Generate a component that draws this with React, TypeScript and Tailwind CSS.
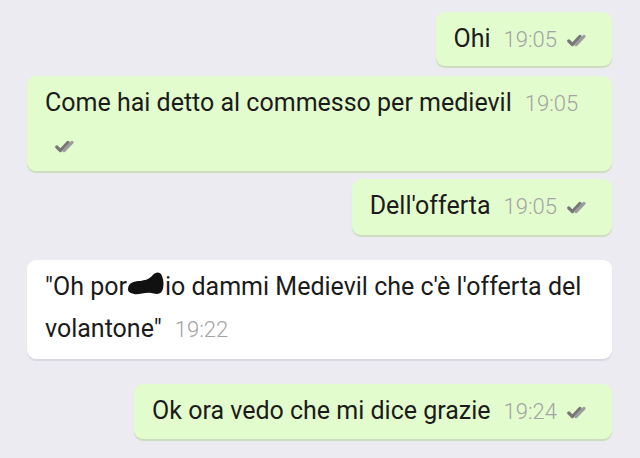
import React from 'react';

type Msg = {
  id: number;
  mine: boolean;
  time: string;
  body: React.ReactNode;
  spacing: string;
};

function Ticks() {
  return (
    <svg width="23" height="13" viewBox="0 0 23 13" className="inline-block align-[0px] ml-[10px]">
      <path d="M1.8 7 L5.4 10.6 L13 2.4" fill="none" stroke="#777" strokeWidth="3.2" strokeLinecap="round" strokeLinejoin="round" />
      <path d="M9 10.6 L17 2.4" fill="none" stroke="#9d9d9d" strokeWidth="3.2" strokeLinecap="round" strokeLinejoin="round" />
    </svg>
  );
}

function Blot() {
  // scribbled-out bit of the quote
  return (
    <svg width="38" height="25" viewBox="0 0 38 25" className="inline-block align-[-1px]">
      <path
        d="M1 18 C1 12 7 10 13 10 C18 9 21 9 25 5 C28 1 33 0 35 5 C37 10 37 16 35 20 C33 24 28 23 24 22 C18 21 12 24 7 23 C3 22 1 21 1 18 Z"
        fill="#111"
      />
    </svg>
  );
}

const messages: Msg[] = [
  { id: 1, mine: true, time: '19:05', body: 'Ohi', spacing: 'mt-[12px] pb-[6px]' },
  { id: 2, mine: true, time: '19:05', body: 'Come hai detto al commesso per medievil', spacing: 'mt-[10px] pb-[5px]' },
  { id: 3, mine: true, time: '19:05', body: "Dell'offerta", spacing: 'mt-[8px] pb-[8px]' },
  {
    id: 4,
    mine: false,
    time: '19:22',
    body: (
      <>
        "Oh por<Blot />io dammi Medievil che c'è l'offerta del volantone"
      </>
    ),
    spacing: 'mt-[25px] pb-[9px]',
  },
  { id: 5, mine: true, time: '19:24', body: 'Ok ora vedo che mi dice grazie', spacing: 'mt-[25px] pb-[7px]' },
];

export default function App() {
  return (
    <div
      className="w-[640px] h-[458px] overflow-hidden bg-[#ecebf1] flex flex-col pl-[27px] pr-[28px]"
      style={{ fontFamily: 'Roboto, "Noto Sans", sans-serif' }}
    >
      {messages.map((m) => (
        <div
          key={m.id}
          className={`${m.spacing} max-w-[585px] rounded-[9px] pl-[18px] pr-[22px] pt-[6px] leading-[42px] text-[25px] text-[#1b1b1b] ${
            m.mine
              ? 'self-end bg-[#e3fcce] shadow-[0_2px_1px_#cddcbd]'
              : 'self-start w-[585px] bg-white shadow-[0_2px_1px_#d9d8e0]'
          }`}
        >
          {m.body}
          <span className="ml-[13px] text-[22px] leading-none font-light text-[#a3a3a3] whitespace-nowrap">{m.time}</span>
          {m.mine && <Ticks />}
        </div>
      ))}
    </div>
  );
}
